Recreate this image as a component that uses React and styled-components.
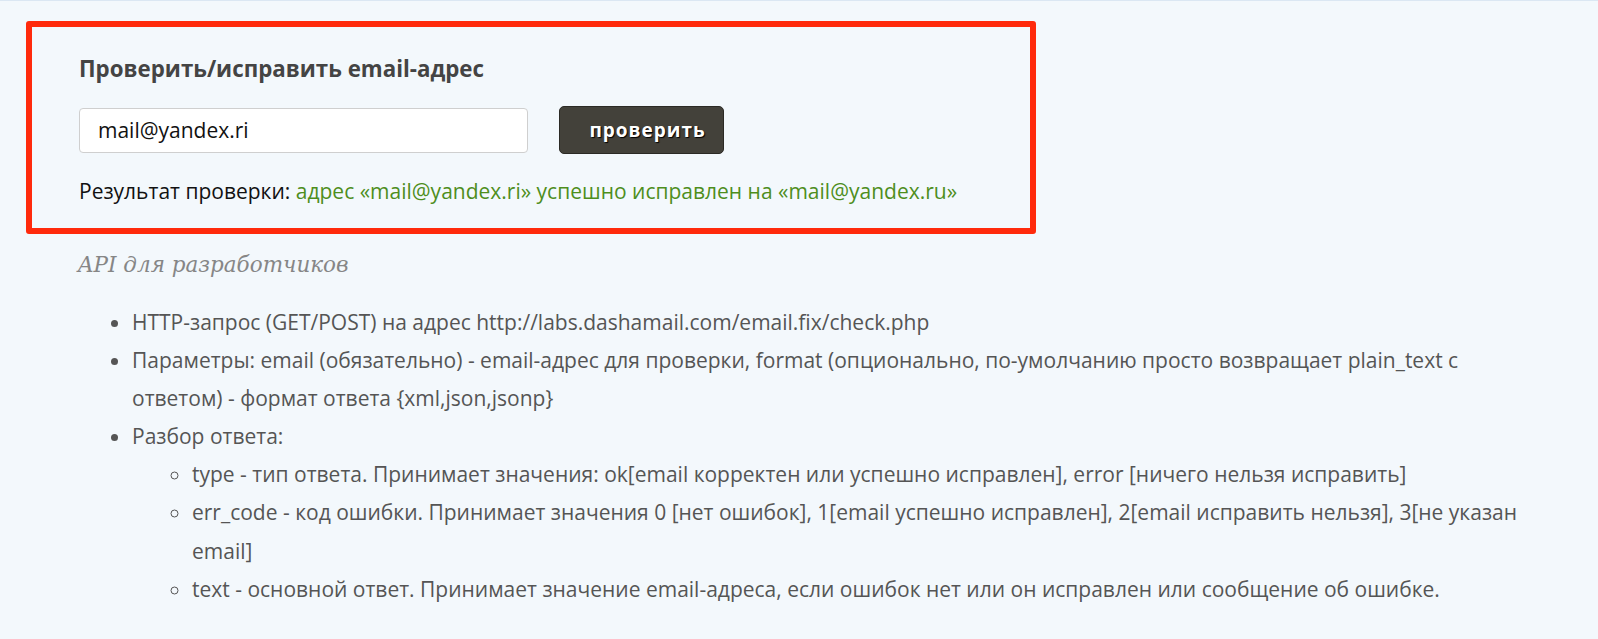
import React, { useState } from 'react';
import styled, { createGlobalStyle } from 'styled-components';

const GlobalStyle = createGlobalStyle`
  html, body {
    margin: 0;
    padding: 0;
    background: #f3f8fc;
  }
  body {
    font-family: "Open Sans", "Liberation Sans", sans-serif;
    border-top: 1px solid #dbe7f3;
  }
`;

const Page = styled.div`
  padding: 20px 0 40px 26px;
`;

const CheckBox = styled.form`
  width: 1010px;
  box-sizing: border-box;
  border: 6px solid #ff2a0c;
  border-radius: 3px;
  padding: 27px 40px 23px 47px;
`;

const Title = styled.h2`
  margin: 0;
  font-size: 22.3px;
  font-weight: 700;
  line-height: 30px;
  color: #444;
`;

const FormRow = styled.div`
  display: flex;
  align-items: center;
  gap: 31px;
  margin-top: 22px;
`;

const EmailInput = styled.input`
  width: 449px;
  height: 45px;
  box-sizing: border-box;
  padding: 0 18px;
  border: 1px solid #cfcfcf;
  border-radius: 4px;
  background: #fff;
  font-family: "Open Sans", sans-serif;
  font-size: 21px;
  color: #111;
  outline: none;
`;

const CheckButton = styled.button`
  width: 165px;
  height: 48px;
  box-sizing: border-box;
  padding: 0 0 0 12px;
  background: #43413a;
  border: 1px solid #2b2a25;
  border-radius: 5px;
  color: #fff;
  font-family: "Open Sans", sans-serif;
  font-size: 19px;
  font-weight: 700;
  letter-spacing: 1px;
  text-shadow: 1px 1px 1px #000;
  cursor: pointer;
`;

const Result = styled.p`
  margin: 23px 0 0;
  font-size: 21px;
  line-height: 28px;
  color: #111;

  span {
    color: #4e8e1c;
  }
`;

const Docs = styled.div`
  padding-left: 52px;
  width: 1504px;
  box-sizing: border-box;
`;

const DocsTitle = styled.h3`
  margin: 19px 0 0;
  font-family: "DejaVu Serif", Georgia, serif;
  font-style: italic;
  font-weight: 400;
  font-size: 21.5px;
  line-height: 24px;
  color: #868686;
`;

const List = styled.ul`
  margin: 26px 0 0;
  padding-left: ${p => (p.nested ? '60px' : '54px')};
  list-style: ${p => (p.nested ? 'circle' : 'disc')};
  font-size: 21px;
  line-height: 38.1px;
  color: #555;

  ${p => p.nested && 'margin-top: 0;'}
`;

export default function App() {
  const [email, setEmail] = useState('mail@yandex.ri');

  return (
    <Page>
      <GlobalStyle />
      <CheckBox onSubmit={e => e.preventDefault()}>
        <Title>Проверить/исправить email-адрес</Title>
        <FormRow>
          <EmailInput value={email} onChange={e => setEmail(e.target.value)} />
          <CheckButton type="submit">проверить</CheckButton>
        </FormRow>
        <Result>
          Результат проверки: <span>адрес «mail@yandex.ri» успешно исправлен на «mail@yandex.ru»</span>
        </Result>
      </CheckBox>

      <Docs>
        <DocsTitle>API для разработчиков</DocsTitle>
        <List>
          <li>HTTP-запрос (GET/POST) на адрес http://labs.dashamail.com/email.fix/check.php</li>
          <li>
            Параметры: email (обязательно) - email-адрес для проверки, format (опционально, по-умолчанию просто
            возвращает plain_text с ответом) - формат ответа {'{xml,json,jsonp}'}
          </li>
          <li>
            Разбор ответа:
            <List nested>
              <li>type - тип ответа. Принимает значения: ok[email корректен или успешно исправлен], error [ничего нельзя исправить]</li>
              <li>err_code - код ошибки. Принимает значения 0 [нет ошибок], 1[email успешно исправлен], 2[email исправить нельзя], 3[не указан email]</li>
              <li>text - основной ответ. Принимает значение email-адреса, если ошибок нет или он исправлен или сообщение об ошибке.</li>
            </List>
          </li>
        </List>
      </Docs>
    </Page>
  );
}
